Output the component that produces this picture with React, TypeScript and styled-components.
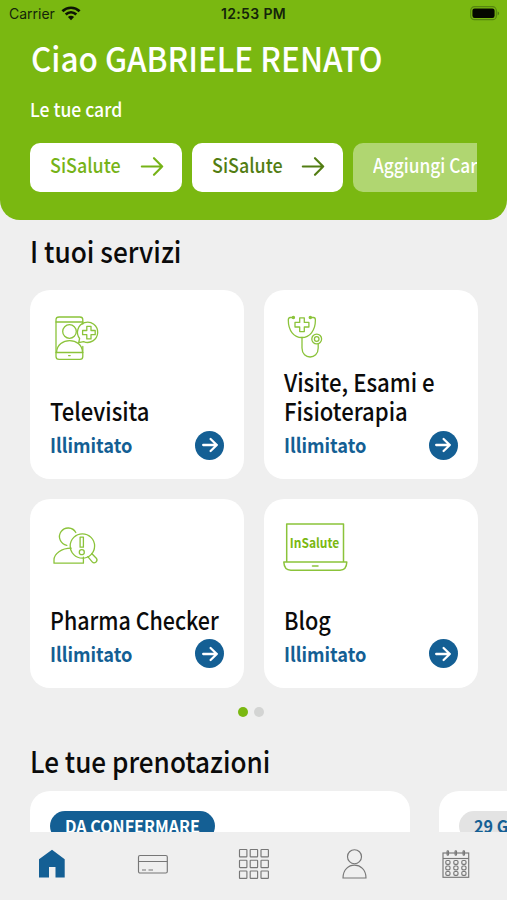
import React from 'react';
import styled, { createGlobalStyle } from 'styled-components';

const GREEN = '#7ab811';
const BLUE = '#145f94';
const DISPLAY = '"Noto Sans CJK JP", "Noto Sans", sans-serif';

const GlobalStyle = createGlobalStyle`
  * { box-sizing: border-box; }
  body { margin: 0; background: #efefef; font-family: ${DISPLAY}; color: #0b0b0b; }
  h1, h2, h3, p { margin: 0; font-weight: inherit; }
`;

const Screen = styled.div`
  width: 507px;
  height: 900px;
  overflow: hidden;
  display: flex;
  flex-direction: column;
  background: #efefef;
`;

const Header = styled.header`
  flex: none;
  height: 220px;
  background: ${GREEN};
  border-radius: 0 0 20px 20px;
  color: #fff;
`;

const StatusBar = styled.div`
  height: 28px;
  padding: 0 7px 0 9px;
  display: grid;
  grid-template-columns: 1fr auto 1fr;
  align-items: center;
  font: 400 14px/28px Inter, sans-serif;
  color: #14250a;
`;

const Carrier = styled.div`
  display: flex;
  align-items: center;
  gap: 6px;
  svg { margin-top: -2px; }
`;

const Clock = styled.div`
  font-weight: 600;
  font-size: 14px;
  letter-spacing: 0.35px;
  margin-right: 2px;
`;

const BatterySlot = styled.div`
  display: flex;
  justify-content: flex-end;
  svg { margin-top: -2px; }
`;

const Fit = styled.span<{ $x: number }>`
  display: inline-block;
  white-space: nowrap;
  transform: scaleX(${(p) => p.$x});
  transform-origin: 0 50%;
`;

const Greeting = styled.h1`
  margin: 7px 0 0 30.5px;
  height: 44px;
  font-size: 34.5px;
  line-height: 44px;
  font-weight: 500;
`;

const CardsLabel = styled.p`
  margin: 18px 0 0 30px;
  height: 24px;
  font-size: 19px;
  line-height: 24px;
  font-weight: 500;
`;

const CardStrip = styled.div`
  margin: 22px 30px 0;
  height: 49px;
  display: flex;
  gap: 10px;
  overflow: hidden;
`;

const CardChip = styled.div<{ $ink: string; $ghost?: boolean }>`
  flex: none;
  width: ${(p) => (p.$ghost ? 190 : 151.5)}px;
  padding: 0 18px 3px 20px;
  display: flex;
  justify-content: space-between;
  align-items: center;
  border-radius: 10px;
  background: ${(p) => (p.$ghost ? '#b0d671' : '#fff')};
  color: ${(p) => p.$ink};
  font-size: 20px;
  line-height: 44px;
  font-weight: 500;
`;

const ChipText = styled.span`
  margin-top: -3px;
`;

const Content = styled.main`
  flex: 1;
  min-height: 0;
  overflow: hidden;
`;

const SectionTitle = styled.h2`
  height: 40px;
  margin-left: 30px;
  font-size: 29px;
  line-height: 40px;
  font-weight: 500;
`;

const Services = styled.section`
  padding-top: 10px;
`;

const ServiceGrid = styled.div`
  margin: 20px 29.5px 0 30px;
  display: grid;
  grid-template-columns: 214px 214px;
  grid-auto-rows: 189px;
  gap: 19.5px;
`;

const ServiceCard = styled.article`
  padding: 20px 20px 19px 20px;
  border-radius: 20px;
  background: #fff;
  display: flex;
  flex-direction: column;
`;

const IconBox = styled.div`
  height: 52px;
  svg { display: block; margin-left: -0.5px; }
`;

const ServiceName = styled.h3`
  margin-top: auto;
  font-size: 24.5px;
  line-height: 29px;
  font-weight: 500;
  display: flex;
  flex-direction: column;
`;

const ServiceFoot = styled.div`
  margin-top: 5px;
  height: 30px;
  display: flex;
  justify-content: space-between;
  align-items: center;
  color: ${BLUE};
  font-size: 20px;
  line-height: 30px;
  font-weight: 700;
`;

const Go = styled.span`
  width: 29px;
  height: 29px;
  border-radius: 50%;
  background: ${BLUE};
  display: grid;
  place-items: center;
`;

const Dots = styled.div`
  margin-top: 19px;
  margin-right: 5px;
  height: 11px;
  display: flex;
  justify-content: center;
  align-items: center;
  gap: 6px;
`;

const Dot = styled.i<{ $on?: boolean }>`
  width: 10px;
  height: 10px;
  border-radius: 50%;
  background: ${(p) => (p.$on ? GREEN : '#d3d4d3')};
`;

const Bookings = styled.section`
  padding-top: 22px;
`;

const BookingStrip = styled.div`
  margin: 11px 0 0 30px;
  display: flex;
  gap: 29px;
`;

const BookingCard = styled.article`
  flex: none;
  width: 380px;
  height: 190px;
  padding: 20px;
  border-radius: 20px;
  background: #fff;
`;

const Pill = styled.div<{ $muted?: boolean }>`
  display: inline-flex;
  width: 165px;
  height: 30px;
  padding-left: 15px;
  border-radius: 15px;
  background: ${(p) => (p.$muted ? '#e3e3e3' : BLUE)};
  color: ${(p) => (p.$muted ? BLUE : '#fff')};
  font-size: 17.5px;
  line-height: 29px;
  font-weight: 700;
`;

const TabBar = styled.nav`
  flex: none;
  height: 68px;
  padding: 0 0 4px 1px;
  display: grid;
  grid-template-columns: repeat(5, 1fr);
  place-items: center;
  background: #efefef;
  svg { display: block; }
`;

const Arrow = ({ color }: { color: string }) => (
  <svg width="24" height="20" viewBox="0 0 24 20" fill="none" stroke={color} strokeWidth="2.1" strokeLinecap="round" strokeLinejoin="round">
    <path d="M1.8 10.5H22.2M14 2.2L22.2 10.5L14 18.8" />
  </svg>
);

const GoArrow = () => (
  <Go>
    <svg width="18" height="16" viewBox="0 0 18 16" fill="none" stroke="#fff" strokeWidth="2.3" strokeLinecap="round" strokeLinejoin="round">
      <path d="M2.2 8H15.8M9.6 2L15.8 8L9.6 14" />
    </svg>
  </Go>
);

const WifiIcon = () => (
  <svg width="20" height="15" viewBox="0 0 20 15" fill="none" stroke="#0d1405" strokeWidth="2.7">
    <path d="M1.4 5.2C6.2.6 13.8.6 18.6 5.2" />
    <path d="M4.7 8.6C7.8 5.7 12.2 5.7 15.3 8.6" />
    <path d="M10 14.3L6.9 11C8.7 9.4 11.3 9.4 13.1 11Z" fill="#0d1405" stroke="none" />
  </svg>
);

const BatteryIcon = () => (
  <svg width="30" height="15" viewBox="0 0 30 15">
    <rect x=".7" y=".7" width="25.6" height="13" rx="3.8" fill="none" stroke="#568510" strokeWidth="1.2" />
    <rect x="2.4" y="2.5" width="22.2" height="9.4" rx="2.2" fill="#050800" />
    <path d="M27.6 5.2C29.6 6.2 29.6 8.4 27.6 9.4Z" fill="#4d7a10" />
  </svg>
);

const line = { fill: 'none', stroke: '#8bc33a', strokeWidth: 1.3, strokeLinejoin: 'round' as const, strokeLinecap: 'round' as const };

const TelevisitIcon = () => (
  <svg width="60" height="52" viewBox="0 0 60 52" {...line}>
    <path d="M32.8 36.5V46.5Q32.8 49.4 29.9 49.4H9.1Q6 49.4 6 46.5V9.8Q6 7 9.1 7H29.9Q32.8 7 32.8 9.8V14" />
    <path d="M6 12H32.8M6 42.5H32.8M18.6 45.6H20.2" />
    <circle cx="19.5" cy="21.5" r="6.8" />
    <path d="M6.6 42.3C7.3 26.8 32 26.8 32.5 42.3" />
    <path d="M29.6 28.5A10.1 10.1 0 1 1 33.6 31.6L28.7 32.6Z" />
    <path d="M36.8 16.3H41V20.5H45.2V24.7H41V28.9H36.8V24.7H32.6V20.5H36.8Z" />
  </svg>
);

const StethoscopeIcon = () => (
  <svg width="60" height="52" viewBox="0 0 60 52" {...line}>
    <path d="M9.5 7.5H7.2Q5.3 7.5 5.3 10C5.3 20.8 11 27.5 18.8 27.5S32.4 20.8 32.4 10Q32.4 7.5 30.5 7.5H28.2" />
    <circle cx="10.4" cy="7.5" r="1.1" fill="#8bc33a" />
    <circle cx="27.3" cy="7.5" r="1.1" fill="#8bc33a" />
    <path d="M16.7 7.8H21.3V12.4H25.9V17H21.3V21.6H16.7V17H12V12.4H16.7Z" />
    <path d="M19 27.5V38C19 50 35.2 50 35.2 38V34" />
    <circle cx="33.7" cy="29" r="4.9" />
    <circle cx="33.7" cy="29" r="2.3" />
  </svg>
);

const PharmaIcon = () => (
  <svg width="60" height="52" viewBox="0 0 60 52" {...line}>
    <path d="M16.8 26.3A8.7 8.7 0 1 1 25.8 13.5" />
    <path d="M33.4 38.2V44.2H4V41C4 34.5 11.5 29.2 21.2 29.2" />
    <circle cx="32.4" cy="27" r="12.2" />
    <rect x="30.1" y="18.2" width="3.3" height="10" />
    <circle cx="31.8" cy="33.2" r="2.5" />
    <path d="M37.8 37.7L42.2 42.8Q43.8 44.6 45.8 43.2Q48 41.3 46.3 39.2L41.7 34.5" />
  </svg>
);

const LaptopText = styled.text`
  font-family: ${DISPLAY};
  font-size: 13.3px;
  font-weight: 700;
`;

const BlogIcon = () => (
  <svg width="68" height="52" viewBox="0 0 68 52" {...line} strokeWidth="1.5">
    <path d="M3.7 42.5V5H60.5V42.5M.8 43H63.8Q63.5 51.2 57 51.2H7.8Q1.2 51.2 .8 43Z" />
    <path d="M29.5 47H35" />
    <LaptopText x="6.8" y="29.4" textLength="49.5" lengthAdjust="spacingAndGlyphs" fill={GREEN} stroke="none">InSalute</LaptopText>
  </svg>
);

const HomeIcon = () => (
  <svg width="28" height="30" viewBox="0 0 28 30">
    <path d="M14 .7L26.7 10.2V28.5H17.5V18H11V28.5H1V10.2Z" fill={BLUE} />
  </svg>
);

const grey = { fill: 'none', stroke: '#777', strokeWidth: 1.15 };

const WalletIcon = () => (
  <svg width="32" height="30" viewBox="0 0 32 30" {...grey}>
    <rect x="1.5" y="6.5" width="28.8" height="17.5" rx="1.5" />
    <path d="M1.5 12.5H30.3M5 21H9M11.5 21H16" />
  </svg>
);

const AppsIcon = () => (
  <svg width="32" height="32" viewBox="0 0 32 32" {...grey}>
    {[1.5, 12.2, 23].map((y) =>
      [1.5, 12.2, 23].map((x) => <rect key={`${x}-${y}`} x={x} y={y} width="7.4" height="7.4" rx=".6" />)
    )}
  </svg>
);

const ProfileIcon = () => (
  <svg width="28" height="32" viewBox="0 0 28 32" {...grey}>
    <circle cx="13.5" cy="8.7" r="7" />
    <path d="M2 30C2 12.8 25 12.8 25 30Z" />
  </svg>
);

const CalendarIcon = () => (
  <svg width="28" height="30" viewBox="0 0 28 30" {...grey}>
    <rect x="1" y="4" width="25.7" height="24.3" />
    <path d="M1 9.5H26.7" />
    {[5.8, 13.8, 21.8].map((x) => (
      <g key={x}>
        <rect x={x - 0.7} y="1.7" width="1.4" height="4.5" rx=".6" />
        {[13.2, 18.7, 24.2].map((y) => (
          <rect key={y} x={x - 2} y={y - 1.7} width="4.2" height="3.9" rx="1.3" />
        ))}
      </g>
    ))}
  </svg>
);

const services = [
  { name: ['Televisita'], x: [0.9], icon: <TelevisitIcon /> },
  { name: ['Visite, Esami e', 'Fisioterapia'], x: [0.905, 0.9], icon: <StethoscopeIcon /> },
  { name: ['Pharma Checker'], x: [0.875], icon: <PharmaIcon /> },
  { name: ['Blog'], x: [0.885], icon: <BlogIcon /> },
];

export default function App() {
  return (
    <Screen>
      <GlobalStyle />
      <Header>
        <StatusBar>
          <Carrier>Carrier <WifiIcon /></Carrier>
          <Clock>12:53 PM</Clock>
          <BatterySlot><BatteryIcon /></BatterySlot>
        </StatusBar>
        <Greeting><Fit $x={0.913}>Ciao GABRIELE RENATO</Fit></Greeting>
        <CardsLabel><Fit $x={0.925}>Le tue card</Fit></CardsLabel>
        <CardStrip>
          <CardChip $ink="#76b317"><ChipText><Fit $x={0.895}>SiSalute</Fit></ChipText><Arrow color="#76b317" /></CardChip>
          <CardChip $ink="#527d12"><ChipText><Fit $x={0.895}>SiSalute</Fit></ChipText><Arrow color="#527d12" /></CardChip>
          <CardChip $ink="#fff" $ghost><ChipText><Fit $x={0.865}>Aggiungi Card</Fit></ChipText></CardChip>
        </CardStrip>
      </Header>
      <Content>
        <Services>
          <SectionTitle><Fit $x={0.905}>I tuoi servizi</Fit></SectionTitle>
          <ServiceGrid>
            {services.map((s) => (
              <ServiceCard key={s.name[0]}>
                <IconBox>{s.icon}</IconBox>
                <ServiceName>
                  {s.name.map((n, i) => <Fit key={n} $x={s.x[i]}>{n}</Fit>)}
                </ServiceName>
                <ServiceFoot><Fit $x={0.91}>Illimitato</Fit><GoArrow /></ServiceFoot>
              </ServiceCard>
            ))}
          </ServiceGrid>
          <Dots><Dot $on /><Dot /></Dots>
        </Services>
        <Bookings>
          <SectionTitle><Fit $x={0.9}>Le tue prenotazioni</Fit></SectionTitle>
          <BookingStrip>
            <BookingCard><Pill><Fit $x={0.92}>DA CONFERMARE</Fit></Pill></BookingCard>
            <BookingCard><Pill $muted><Fit $x={0.92}>29 GIUGNO</Fit></Pill></BookingCard>
          </BookingStrip>
        </Bookings>
      </Content>
      <TabBar>
        <HomeIcon /><WalletIcon /><AppsIcon /><ProfileIcon /><CalendarIcon />
      </TabBar>
    </Screen>
  );
}
